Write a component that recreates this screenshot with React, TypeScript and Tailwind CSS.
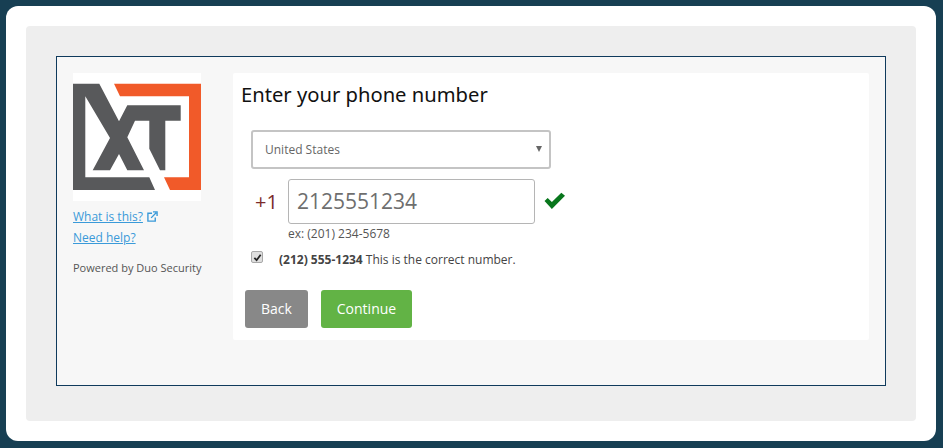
const sans = "font-['Open_Sans',sans-serif]"

function Logo() {
  return (
    <svg viewBox="0 0 128 128" className="w-[128px] h-[128px] bg-white block">
      <path fill="#f15a29" d="M41 10.700H128V117H97L91 104.300H116V23.300H47Z" />
      <path
        fill="#58595b"
        d="M0 10.700H26.300L46 48.300L54.300 32.300H107.700V47.700H92.300V97.300H87L76.300 75.700V47.700H62L54.300 64.300L71 97.300H54.300L46 81L37 97.300H19.700L37 65L12.300 23.300V104.300H76.300L82 117H0Z"
      />
    </svg>
  )
}

function ExternalLink() {
  return (
    <svg viewBox="0 0 12 12" className="w-[11px] h-[11px] ml-1 inline-block align-[-0.5px]" fill="none" stroke="#3a9ad9" strokeWidth="1.500">
      <path d="M5.500 2.500H1V11H9V7" />
      <path d="M4.500 7.500L10 2M6.500 1H11V5.500" />
    </svg>
  )
}

export default function App() {
  return (
    <div className={`w-[943px] h-[448px] bg-[#173f53] pt-[6px] pl-[6px] ${sans}`}>
      <div className="w-[930px] h-[435px] bg-white rounded-[12px] p-[20px]">
        <div className="w-[890px] h-[395px] bg-[#eeeeee] rounded-[4px] pt-[30px] pl-[30px]">
          <div className="w-[830px] h-[330px] border border-[#0f3a5c] bg-[#f7f7f7] pt-[16px] pl-[16px] flex">
            <div className="w-[160px] shrink-0">
              <Logo />
              <div className="mt-[7px] text-[12px] leading-[18px] text-[#3a9ad9]">
                <a className="underline">What is this?</a>
                <ExternalLink />
              </div>
              <div className="mt-[3px] text-[12px] leading-[18px] text-[#3a9ad9]">
                <a className="underline">Need help?</a>
              </div>
              <p className="mt-[13px] text-[11px] leading-[16px] text-[#555555]">Powered by Duo Security</p>
            </div>

            <div className="w-[636px] h-[267px] bg-white rounded-[2px] pl-[8px]">
              <h1 className="mt-[7px] text-[20.200px] leading-[29px] text-[#111111] font-['Noto_Sans',sans-serif]">Enter your phone number</h1>

              <div className="mt-[21px] ml-[10px] w-[300px] h-[39px] border-2 border-[#c4c4c4] rounded-[3px] flex items-center justify-between pl-[12px] pr-[7px]">
                <span className="text-[12px] text-[#666666]">United States</span>
                <span className="w-0 h-0 border-x-[3.500px] border-x-transparent border-t-[6px] border-t-[#666666] -mt-[2px]" />
              </div>

              <div className="mt-[10px] ml-[14px] flex items-center">
                <span className="w-[33px] text-[20px] text-[#7a2a2a]">+1</span>
                <div className="w-[247px] h-[45px] border border-[#b5b5b5] rounded-[3px] pl-[8px] flex items-center text-[21px] text-[#6e6e6e]">
                  2125551234
                </div>
                <svg viewBox="0 0 20 16" className="w-[21px] h-[17px] ml-[9px] -mt-[2px]">
                  <path fill="#08761c" d="M0.500 8.500L3.500 5.500L7.500 9.500L16.500 0.500L20 3.500L7.500 16Z" />
                </svg>
              </div>

              <p className="ml-[47px] mt-[1px] text-[12px] leading-[18px] text-[#555555]">ex: (201) 234-5678</p>

              <div className="mt-[7px] ml-[10px] flex items-start">
                <span className="w-[12px] h-[12px] mt-[1px] bg-[#dedede] border border-[#a8a8a8] rounded-[2px] flex items-center justify-center">
                  <svg viewBox="0 0 10 10" className="w-[9px] h-[9px]">
                    <path fill="none" stroke="#222222" strokeWidth="2" d="M1.500 5.500L4 8L8.500 2" />
                  </svg>
                </span>
                <p className="ml-[16px] text-[12px] leading-[18px] mt-[1px] text-[#444444]">
                  <b>(212) 555-1234</b> This is the correct number.
                </p>
              </div>

              <div className="mt-[21px] ml-[4px] flex gap-[13px]">
                <button className="w-[63px] h-[38px] bg-[#888888] rounded-[3px] text-white text-[14px] pb-[1px]">Back</button>
                <button className="w-[91px] h-[38px] bg-[#62b345] rounded-[3px] text-white text-[14px] pb-[1px]">Continue</button>
              </div>
            </div>
          </div>
        </div>
      </div>
    </div>
  )
}
